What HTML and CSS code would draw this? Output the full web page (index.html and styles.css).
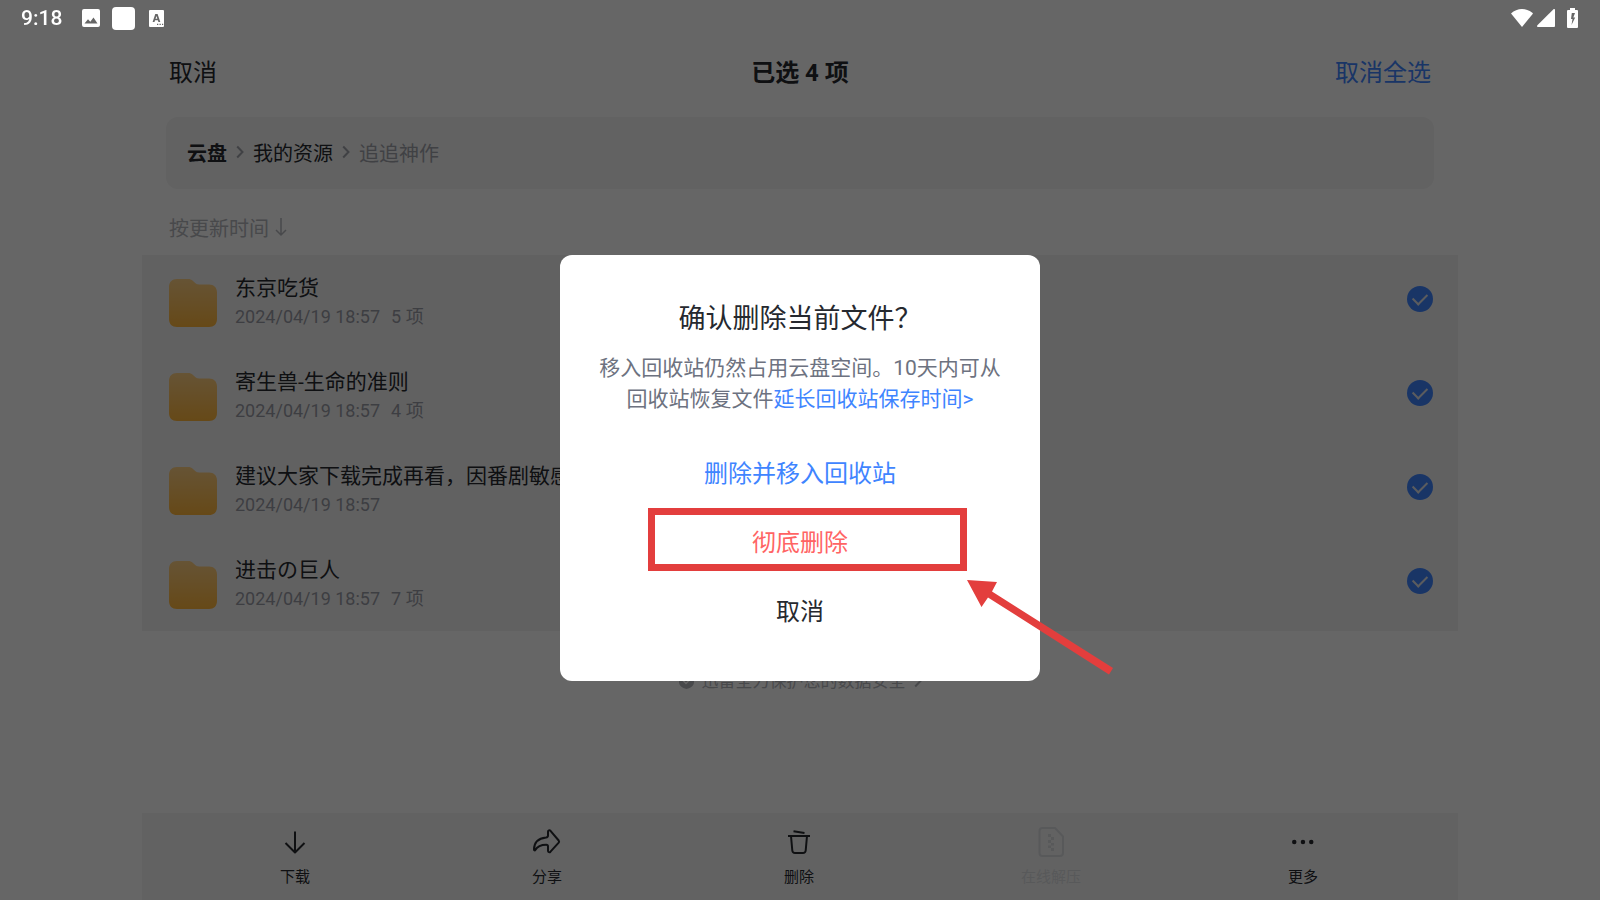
FILE: index.html
```html
<!DOCTYPE html>
<html lang="zh-CN">
<head>
    <meta charset="UTF-8">
    <meta name="viewport" content="width=device-width, initial-scale=1.0">
    <title>云盘 - 追追神作</title>
    <link rel="stylesheet" href="styles.css">
</head>
<body>

<!-- Shared icons -->
<svg class="symbols" aria-hidden="true">
    <defs>
        <linearGradient id="folderFill" x1="0" y1="0" x2="0" y2="1">
            <stop offset="0" stop-color="#ffd185"/>
            <stop offset="1" stop-color="#ffb63c"/>
        </linearGradient>
    </defs>
    <symbol id="folder" viewBox="0 0 48 48">
        <path fill="url(#folderFill)" d="M8 0h11c2 0 3.500 .6 5 2l2.500 2.200c1 .8 2 1.200 3.500 1.200h10c5 0 8 3 8 8V40c0 5-3 8-8 8H8c-5 0-8-3-8-8V8c0-5 3-8 8-8z"/>
    </symbol>
    <symbol id="chevron" viewBox="0 0 8 14">
        <path fill="none" stroke="currentColor" stroke-width="2" d="M1.200 1.500L6.500 7l-5.300 5.500"/>
    </symbol>
</svg>

<!-- Status bar -->
<div class="status-bar">
    <div class="status-left">
        <span class="clock">9:18</span>
        <svg width="18" height="18" viewBox="0 0 18 18"><path fill="#fff" fill-rule="evenodd" d="M2 0h14a2 2 0 0 1 2 2v14a2 2 0 0 1-2 2H2a2 2 0 0 1-2-2V2a2 2 0 0 1 2-2zM2.500 14.500h13l-4-6-3.200 4.200-2.300-2.500z"/></svg>
        <span class="app-square"></span>
        <svg width="15" height="17" viewBox="0 0 15 17"><path fill="#fff" fill-rule="evenodd" d="M1 0h13a1 1 0 0 1 1 1v15a1 1 0 0 1-1 1H1a1 1 0 0 1-1-1V1a1 1 0 0 1 1-1zM6.300 4L3.600 12h1.900l.5-1.700h2.900l.5 1.700h1.900L8.600 4zM7.450 5.900l.9 2.900H6.500zM8 13.700h1.300V15H8zM10.500 13.700h1.300V15h-1.300zM13 13.700h1.200V15H13z"/></svg>
    </div>
    <div class="status-right">
        <svg width="22" height="18" viewBox="0 0 22 18"><path fill="#fff" d="M11 18L0 4.500C3 1.500 7 0 11 0s8 1.500 11 4.500z"/></svg>
        <svg width="18" height="18" viewBox="0 0 18 18"><path fill="#fff" d="M18 1v16a1 1 0 0 1-1 1H1c-1 0-1.300-1-.6-1.700L16.500 .3C17.200-.3 18 0 18 1z"/></svg>
        <svg class="battery" width="11" height="20" viewBox="0 0 11 20"><path fill="#fff" fill-rule="evenodd" d="M3 0h5v2h2a1 1 0 0 1 1 1v16a1 1 0 0 1-1 1H1a1 1 0 0 1-1-1V3a1 1 0 0 1 1-1h2zM4.800 5L4 11h1.500l-1 6 3.700-7.500H6.300L8 5z"/></svg>
    </div>
</div>

<!-- File list page -->
<div class="page">
    <header class="header">
        <button class="header-btn" type="button">取消</button>
        <h1>已选 4 项</h1>
        <button class="header-btn select-all" type="button">取消全选</button>
    </header>

    <nav class="breadcrumb">
        <a class="root" href="#">云盘</a>
        <svg width="8" height="14"><use href="#chevron"/></svg>
        <a href="#">我的资源</a>
        <svg width="8" height="14"><use href="#chevron"/></svg>
        <span class="current">追追神作</span>
    </nav>

    <button class="sort" type="button">按更新时间
        <svg width="12" height="20" viewBox="0 0 12 20"><path fill="none" stroke="currentColor" stroke-width="1.500" d="M6 1v17M1 13l5 5 5-5"/></svg>
    </button>

    <ul class="file-list">
        <li>
            <svg class="folder" width="48" height="48"><use href="#folder"/></svg>
            <label class="file-info" for="file1">
                <span class="name">东京吃货</span>
                <span class="meta"><span>2024/04/19 18:57</span><span>5 项</span></span>
            </label>
            <input type="checkbox" id="file1" checked>
        </li>
        <li>
            <svg class="folder" width="48" height="48"><use href="#folder"/></svg>
            <label class="file-info" for="file2">
                <span class="name">寄生兽-生命的准则</span>
                <span class="meta"><span>2024/04/19 18:57</span><span>4 项</span></span>
            </label>
            <input type="checkbox" id="file2" checked>
        </li>
        <li>
            <svg class="folder" width="48" height="48"><use href="#folder"/></svg>
            <label class="file-info" for="file3">
                <span class="name">建议大家下载完成再看，因番剧敏感</span>
                <span class="meta"><span>2024/04/19 18:57</span></span>
            </label>
            <input type="checkbox" id="file3" checked>
        </li>
        <li>
            <svg class="folder" width="48" height="48"><use href="#folder"/></svg>
            <label class="file-info" for="file4">
                <span class="name">进击の巨人</span>
                <span class="meta"><span>2024/04/19 18:57</span><span>7 项</span></span>
            </label>
            <input type="checkbox" id="file4" checked>
        </li>
    </ul>

    <a class="safety" href="#">
        <svg width="15" height="16" viewBox="0 0 15 16"><path fill="currentColor" d="M7.500 0L15 2.500V9c0 3.500-3 6-7.500 7C3 15 0 12.500 0 9V2.500z"/><path fill="none" stroke="#fff" stroke-width="1.500" d="M4 7.500l3 3 4.500-4.500"/></svg>
        迅雷全力保护您的数据安全
        <svg width="8" height="14"><use href="#chevron"/></svg>
    </a>

    <!-- Bottom toolbar -->
    <div class="toolbar">
        <button type="button">
            <svg width="32" height="32" viewBox="0 0 32 32"><path d="M16 5.500v20M6.500 17l9.500 9.500 9.500-9.500"/></svg>
            下载
        </button>
        <button type="button">
            <svg width="32" height="32" viewBox="0 0 32 32"><path d="M17 5.800c0-1.600 1.500-2 2.500-1L27.700 14.500c.6.800.6 1.400 0 2.200l-8.200 9c-1 1-2.500.6-2.500-1V20.500c0-1.200-.5-1.700-1.700-1.700C10 18.800 6.500 20 4.300 24c-.4.700-1.300.5-1.300-.4C3 16.500 7.500 12.300 15 11.500c1.400-.2 2-.7 2-2z"/></svg>
            分享
        </button>
        <button type="button">
            <svg width="32" height="32" viewBox="0 0 32 32"><path d="M5 10h22M10.500 5.300l11 1.700M8 10l1.300 14.500c.2 1.700 1 2.500 2.700 2.500h8c1.700 0 2.500-.8 2.700-2.500L24 10"/></svg>
            删除
        </button>
        <button type="button" disabled>
            <svg width="32" height="32" viewBox="0 0 32 32"><path d="M7.500 2H20l8 8.500V27c0 2-1 3-3 3H7.500c-2 0-3-1-3-3V5c0-2 1-3 3-3z"/><path class="solid" d="M13 8h3v3h-3zM16 11h3v3h-3zM13 14h3v3h-3zM16 17h3v2.500h-3zM13 19.500h3v2.500h-3zM16 22h3v3h-3z"/></svg>
            在线解压
        </button>
        <button type="button">
            <svg width="32" height="32" viewBox="0 0 32 32"><path class="solid" d="M5 16a2 2 0 1 1 4.500 0 2 2 0 0 1-4.500 0zM13.700 16a2 2 0 1 1 4.500 0 2 2 0 0 1-4.500 0zM22 16a2 2 0 1 1 4.500 0 2 2 0 0 1-4.500 0z"/></svg>
            更多
        </button>
    </div>
</div>

<!-- Delete confirmation -->
<div class="overlay">
    <div class="dialog" role="dialog" aria-modal="true" aria-labelledby="dialogTitle">
        <h2 id="dialogTitle">确认删除当前文件？</h2>
        <p>移入回收站仍然占用云盘空间。10天内可从回收站恢复文件<a href="#">延长回收站保存时间&gt;</a></p>
        <button class="recycle" type="button">删除并移入回收站</button>
        <button class="remove" type="button">彻底删除</button>
        <button type="button">取消</button>

        <span class="mark-box"></span>
        <svg class="mark-arrow" width="150" height="98" viewBox="0 0 150 98"><path fill="#e33e3d" d="M0 0l30 2-5 9.500L146 88l-4 6.500L21 17.500 14.500 27z"/></svg>
    </div>
</div>

</body>
</html>
```
FILE: styles.css
```css
/* Base Styles */
* {
    margin: 0;
    padding: 0;
    box-sizing: border-box;
}

body {
    display: flex;
    flex-direction: column;
    min-height: 100vh;
    background: #fff;
    color: #26292f;
    font-family: Roboto, "Noto Sans CJK SC", sans-serif;
}

button {
    border: none;
    background: none;
    color: inherit;
    font-family: inherit;
    cursor: pointer;
}

a {
    color: inherit;
    text-decoration: none;
}

svg {
    flex-shrink: 0;
}

.symbols {
    position: absolute;
    width: 0;
    height: 0;
}

/* Status bar */
.status-bar {
    position: relative;
    z-index: 2;
    display: flex;
    justify-content: space-between;
    height: 36px;
    padding: 0 22px 0 21px;
    color: #fff;
}

.status-left,
.status-right {
    display: flex;
    align-items: center;
}

.clock {
    margin-right: 20px;
    font-size: 21px;
    font-weight: 500;
    line-height: 36px;
}

.app-square {
    width: 23px;
    height: 23px;
    margin: 0 14px 0 12px;
    border-radius: 4px;
    background: #fff;
}

.status-right {
    gap: 4px;
}

.battery {
    margin-left: 8px;
}

/* Page */
.page {
    flex: 1;
    display: flex;
    flex-direction: column;
    width: 100%;
    max-width: 1316px;
    margin: 0 auto;
}

.header {
    display: grid;
    grid-template-columns: 1fr auto 1fr;
    align-items: center;
    height: 74px;
    padding: 0 27px;
}

.header h1,
.header-btn {
    font-size: 24px;
    line-height: 36px;
}

.header-btn {
    justify-self: start;
}

.select-all {
    justify-self: end;
    color: #3f85ff;
}

.breadcrumb {
    display: flex;
    align-items: center;
    gap: 9px;
    height: 72px;
    margin: 7px 24px 0;
    padding: 0 21px 2px;
    border-radius: 12px;
    background: #f5f5f5;
    font-size: 20px;
}

.breadcrumb .root {
    font-weight: bold;
}

.breadcrumb svg,
.breadcrumb .current {
    color: #a0a3ab;
}

.sort {
    display: flex;
    align-items: center;
    align-self: flex-start;
    gap: 6px;
    height: 66px;
    padding: 10px 27px 0;
    color: #b4b6bc;
    font-size: 20px;
}

/* File list */
.file-list {
    list-style: none;
    background: #f3f3f3;
}

.file-list li {
    display: flex;
    align-items: center;
    gap: 18px;
    height: 94px;
    padding: 2px 25px 0 27px;
}

.file-info {
    flex: 1;
    display: flex;
    flex-direction: column;
    padding-bottom: 3px;
}

.name {
    font-size: 21px;
    line-height: 30px;
}

.meta {
    display: flex;
    gap: 11px;
    color: #9a9ca6;
    font-size: 18px;
    line-height: 28px;
}

.file-list input {
    appearance: none;
    display: grid;
    place-items: center;
    width: 26px;
    height: 26px;
    margin-bottom: 8px;
    border-radius: 50%;
    background: #e3e4e8;
}

.file-list input:checked {
    background: #3f85ff;
}

.file-list input:checked::after {
    content: "";
    width: 12px;
    height: 7px;
    margin-bottom: 3px;
    border: solid #e4e6ec;
    border-width: 0 0 2px 2px;
    transform: rotate(-45deg);
}

.safety {
    display: flex;
    align-items: center;
    justify-content: center;
    gap: 8px;
    margin: 36px 0 auto;
    color: #b4b6bc;
    font-size: 17px;
    line-height: 28px;
}

/* Toolbar */
.toolbar {
    display: grid;
    grid-template-columns: repeat(5, 1fr);
    height: 87px;
    padding: 0 29px 0 27px;
    background: #f5f5f5;
}

.toolbar button {
    display: flex;
    flex-direction: column;
    align-items: center;
    gap: 8px;
    padding-top: 13px;
    font-size: 15px;
    line-height: 22px;
}

.toolbar button:disabled {
    color: #dcdee2;
}

.toolbar svg {
    fill: none;
    stroke: currentColor;
    stroke-width: 2;
    stroke-linejoin: round;
}

.toolbar .solid {
    fill: currentColor;
    stroke: none;
}

/* Dialog */
.overlay {
    position: fixed;
    inset: 0;
    z-index: 1;
    display: flex;
    align-items: center;
    justify-content: center;
    padding-top: 36px;
    background: rgba(0, 0, 0, 0.6);
}

.dialog {
    position: relative;
    display: flex;
    flex-direction: column;
    width: 480px;
    padding: 44px 36px 37px;
    border-radius: 12px;
    background: #fff;
    text-align: center;
}

.dialog h2 {
    font-size: 27px;
    font-weight: normal;
    line-height: 40px;
}

.dialog p {
    margin: 14px 0 22px;
    color: #6d7280;
    font-size: 21px;
    line-height: 31px;
}

.dialog p a {
    color: #3f85ff;
}

.dialog button {
    height: 69px;
    font-size: 24px;
}

.dialog .recycle {
    color: #3f85ff;
}

.dialog .remove {
    color: #ff6464;
}

/* Highlight over the permanent delete button */
.mark-box {
    position: absolute;
    top: 253px;
    left: 88px;
    width: 319px;
    height: 63px;
    border: 7px solid #e33e3d;
    pointer-events: none;
}

.mark-arrow {
    position: absolute;
    top: 325px;
    left: 407px;
    pointer-events: none;
}
```
